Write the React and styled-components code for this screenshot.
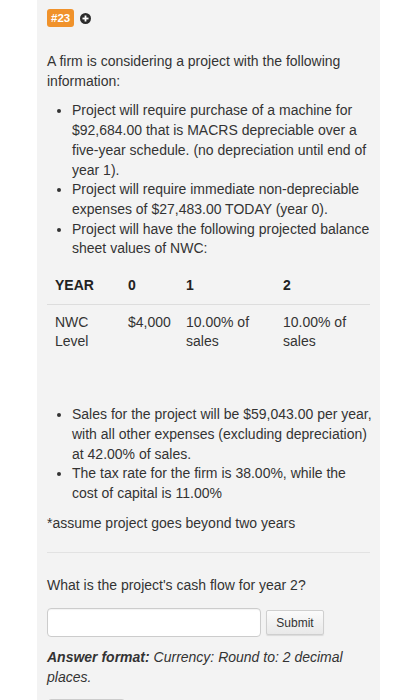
import React from 'react';
import styled, { createGlobalStyle } from 'styled-components';

const GlobalStyle = createGlobalStyle`
  body {
    margin: 0;
    background: #ffffff;
    font-family: "Liberation Sans", Arial, sans-serif;
    color: #333333;
  }
`;

const Panel = styled.div`
  margin-left: 37px;
  width: 343px;
  min-height: 700px;
  box-sizing: border-box;
  padding: 9px 5px 0 10px;
  background: #f3f3f3;
  font-size: 14px;
  line-height: 19.7px;
`;

const BadgeRow = styled.div`
  display: flex;
  align-items: center;
  gap: 6px;
  height: 18px;
`;

const Badge = styled.span`
  display: inline-block;
  background: #f0922b;
  color: #fff;
  font-size: 11.5px;
  font-weight: bold;
  line-height: 18px;
  padding: 0 4px;
  border-radius: 3px;
`;

const Intro = styled.p`
  margin: 25px 0 0;
`;

const List = styled.ul`
  margin: ${(p) => p.$top || 10}px 0 0;
  padding-left: 25px;
  list-style: disc;
`;

const Table = styled.table`
  margin: 9px 0 0;
  width: 323px;
  table-layout: fixed;
  border-collapse: collapse;
`;

const Th = styled.th`
  box-sizing: border-box;
  text-align: left;
  font-weight: bold;
  color: #222;
  padding: 8px 8px;
  border-bottom: 1px solid #dddddd;
  vertical-align: top;
  width: ${(p) => p.$w}px;
`;

const Td = styled.td`
  padding: 8px 8px;
  vertical-align: top;
`;

const Note = styled.p`
  margin: 10px 0 0;
`;

const Divider = styled.hr`
  margin: 19px 0 0;
  width: 323px;
  border: 0;
  border-top: 1px solid #e2e2e2;
`;

const Question = styled.p`
  margin: 23px 0 0;
`;

const AnswerRow = styled.div`
  display: flex;
  align-items: center;
  gap: 5px;
  margin-top: 12px;
`;

const Input = styled.input`
  width: 214px;
  height: 29px;
  box-sizing: border-box;
  border: 1px solid #cccccc;
  border-radius: 4px;
  background: #fff;
  box-shadow: inset 0 1px 1px rgba(0, 0, 0, 0.05);
`;

const SubmitButton = styled.button`
  width: 58px;
  height: 25px;
  font-family: "Liberation Sans", Arial, sans-serif;
  font-size: 12px;
  color: #333;
  border: 1px solid #cfcfcf;
  border-radius: 2px;
  background: linear-gradient(#fbfbfb, #e9e9e9);
  box-shadow: 0 1px 1px rgba(0, 0, 0, 0.1);
`;

const Format = styled.p`
  margin: 11px 0 0;
  font-style: italic;
`;

const Stub = styled.div`
  margin-top: 12px;
  margin-left: 1px;
  width: 75px;
  height: 24px;
  background: #fff;
  border: 1px solid #cccccc;
  border-radius: 3px;
`;

const PlusIcon = () => (
  <svg width="11" height="11" viewBox="0 0 11 11">
    <circle cx="5.5" cy="5.5" r="5.5" fill="#2b2b2b" />
    <rect x="2.5" y="4.6" width="6" height="1.8" fill="#fff" />
    <rect x="4.6" y="2.5" width="1.8" height="6" fill="#fff" />
  </svg>
);

export default function App() {
  return (
    <>
      <GlobalStyle />
      <Panel>
        <BadgeRow>
          <Badge>#23</Badge>
          <PlusIcon />
        </BadgeRow>
        <Intro>A firm is considering a project with the following information:</Intro>
        <List>
          <li>
            Project will require purchase of a machine for $92,684.00 that is MACRS depreciable over a
            five-year schedule. (no depreciation until end of year 1).
          </li>
          <li>Project will require immediate non-depreciable expenses of $27,483.00 TODAY (year 0).</li>
          <li>Project will have the following projected balance sheet values of NWC:</li>
        </List>
        <Table>
          <thead>
            <tr>
              <Th $w={73}>YEAR</Th>
              <Th $w={58}>0</Th>
              <Th $w={97}>1</Th>
              <Th $w={95}>2</Th>
            </tr>
          </thead>
          <tbody>
            <tr>
              <Td>NWC Level</Td>
              <Td>$4,000</Td>
              <Td>10.00% of sales</Td>
              <Td>10.00% of sales</Td>
            </tr>
          </tbody>
        </Table>
        <List $top={45}>
          <li>
            Sales for the project will be $59,043.00 per year, with all other expenses (excluding
            depreciation) at 42.00% of sales.
          </li>
          <li>The tax rate for the firm is 38.00%, while the cost of capital is 11.00%</li>
        </List>
        <Note>*assume project goes beyond two years</Note>
        <Divider />
        <Question>What is the project's cash flow for year 2?</Question>
        <AnswerRow>
          <Input type="text" />
          <SubmitButton type="button">Submit</SubmitButton>
        </AnswerRow>
        <Format>
          <b>Answer format:</b> Currency: Round to: 2 decimal places.
        </Format>
        <Stub />
      </Panel>
    </>
  );
}
